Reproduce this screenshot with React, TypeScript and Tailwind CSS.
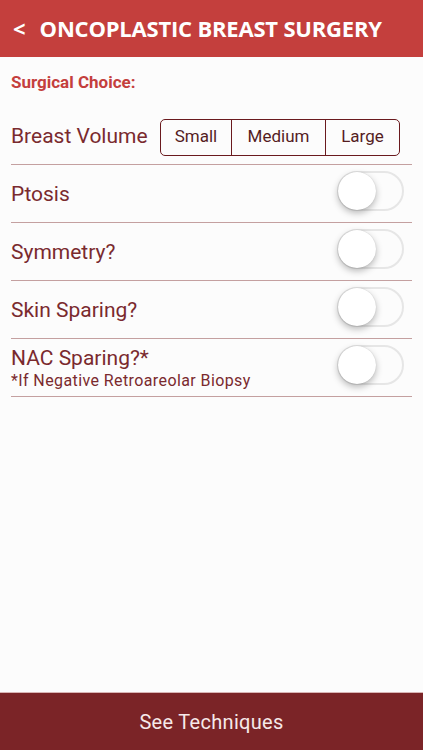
import React, { useState } from "react";

const rows = [
  { label: "Ptosis" },
  { label: "Symmetry?" },
  { label: "Skin Sparing?" },
  { label: "NAC Sparing?*", note: "*If Negative Retroareolar Biopsy" },
];

function Toggle({ on, onClick }: { on: boolean; onClick: () => void }) {
  return (
    <button
      onClick={onClick}
      className={`relative w-[67px] h-[40px] rounded-full border-2 shrink-0 ${
        on ? "bg-[#4cd964] border-[#4cd964]" : "bg-[#fcfcfc] border-[#e6e6e6]"
      }`}
    >
      <span
        className={`absolute top-[-1px] w-[38px] h-[38px] rounded-full bg-white shadow-[0_3px_7px_rgba(0,0,0,0.28),0_0_1px_rgba(0,0,0,0.2)] ${
          on ? "left-[26px]" : "left-[-1px]"
        }`}
      />
    </button>
  );
}

export default function App() {
  const [volume, setVolume] = useState<string | null>(null);
  const [toggles, setToggles] = useState([false, false, false, false]);

  return (
    <div className="w-[423px] h-[750px] flex flex-col bg-[#fcfcfc] font-['Roboto',sans-serif] text-[#7a2a2e]">
      <div className="h-[57px] bg-[#c43f3d] flex items-center px-[13px] gap-[14px] text-white font-['Open_Sans',sans-serif] font-bold">
        <span className="text-[22px]">&lt;</span>
        <span className="text-[22px] tracking-[-0.2px]">ONCOPLASTIC BREAST SURGERY</span>
      </div>

      <div className="flex-1 px-[11px]">
        <div className="h-[53px] pt-[15px] text-[17px] leading-[20px] font-bold text-[#c43f3d]">Surgical Choice:</div>

        <div className="flex items-center h-[55px] border-b border-[#c4a0a0]">
          <span className="text-[21px] w-[149px]">Breast Volume</span>
          <div className="flex h-[37px] border-[1.5px] border-[#6a1a1e] rounded-[5px] text-[17px] text-[#551c1f] overflow-hidden">
            {["Small", "Medium", "Large"].map((v, i) => (
              <button
                key={v}
                onClick={() => setVolume(v)}
                className={`flex items-center justify-center ${
                  i === 0 ? "w-[70px]" : i === 1 ? "w-[95px] border-x-[1.5px] border-[#6a1a1e]" : "w-[73px]"
                } ${volume === v ? "bg-[#6a1a1e] text-white" : ""}`}
              >
                {v}
              </button>
            ))}
          </div>
        </div>

        {rows.map((r, i) => (
          <div key={r.label} className="flex items-center justify-between h-[58px] border-b border-[#c4a0a0]">
            <div className="flex flex-col">
              <span className="text-[21px] leading-[26px]">{r.label}</span>
              {r.note && <span className="text-[16px] leading-[20px] tracking-[0.4px]">{r.note}</span>}
            </div>
            <div className="mr-[8px]">
              <Toggle
                on={toggles[i]}
                onClick={() => setToggles(toggles.map((t, j) => (j === i ? !t : t)))}
              />
            </div>
          </div>
        ))}
      </div>

      <button className="h-[58px] bg-[#7b2427] text-[#f6e9e9] text-[20px] tracking-[0.3px] border-t border-[#d9b5b5]">
        See Techniques
      </button>
    </div>
  );
}
